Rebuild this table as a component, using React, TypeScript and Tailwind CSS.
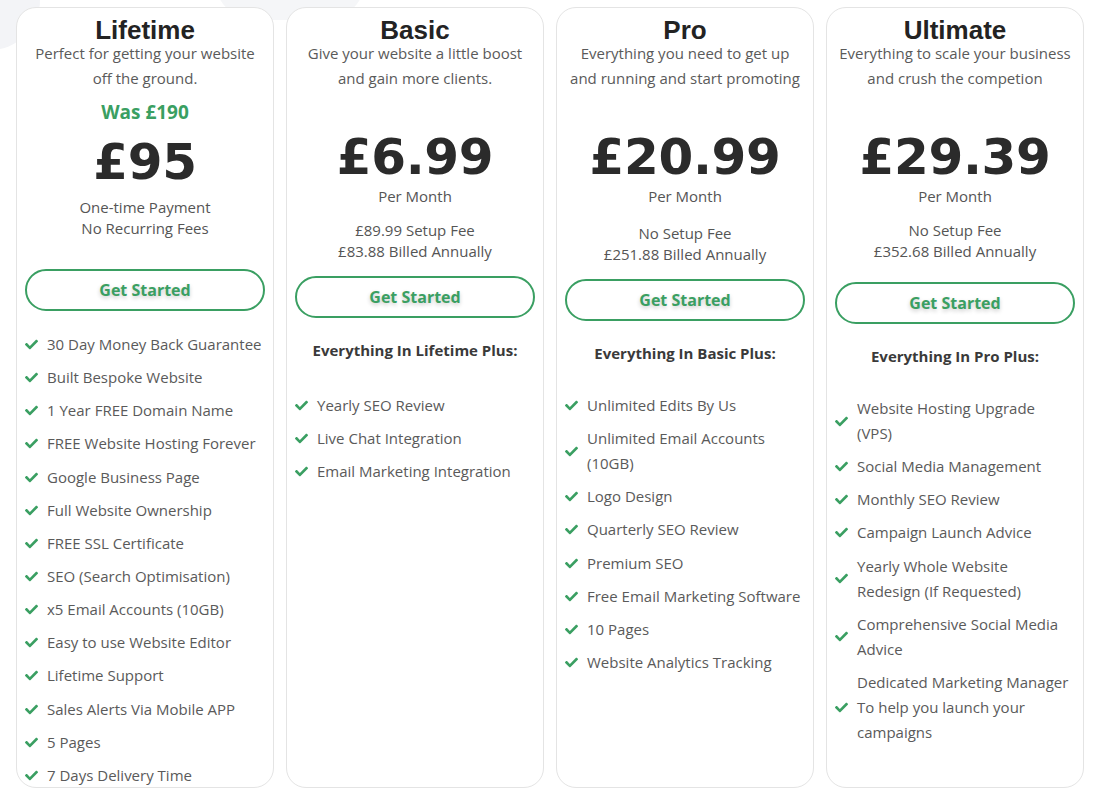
import React from 'react';
import { FaCheck } from 'react-icons/fa';

type Plan = {
  name: string;
  desc: string[];
  was?: string;
  price: string;
  perMonth?: boolean;
  fees: string[];
  heading?: string;
  features: string[][];
  feesMt: string;
  buttonMt: string;
  headingMt: string;
  featuresMt: string;
};

const plans: Plan[] = [
  {
    name: 'Lifetime',
    desc: ['Perfect for getting your website', 'off the ground.'],
    was: 'Was £190',
    price: '£95',
    fees: ['One-time Payment', 'No Recurring Fees'],
    features: [
      ['30 Day Money Back Guarantee'],
      ['Built Bespoke Website'],
      ['1 Year FREE Domain Name'],
      ['FREE Website Hosting Forever'],
      ['Google Business Page'],
      ['Full Website Ownership'],
      ['FREE SSL Certificate'],
      ['SEO (Search Optimisation)'],
      ['x5 Email Accounts (10GB)'],
      ['Easy to use Website Editor'],
      ['Lifetime Support'],
      ['Sales Alerts Via Mobile APP'],
      ['5 Pages'],
      ['7 Days Delivery Time'],
    ],
    feesMt: 'mt-[6px]',
    buttonMt: 'mt-[30px]',
    headingMt: 'mt-0',
    featuresMt: 'mt-[21px]',
  },
  {
    name: 'Basic',
    desc: ['Give your website a little boost', 'and gain more clients.'],
    price: '£6.99',
    perMonth: true,
    fees: ['£89.99 Setup Fee', '£83.88 Billed Annually'],
    heading: 'Everything In Lifetime Plus:',
    features: [['Yearly SEO Review'], ['Live Chat Integration'], ['Email Marketing Integration']],
    feesMt: 'mt-[13px]',
    buttonMt: 'mt-[14px]',
    headingMt: 'mt-[22px]',
    featuresMt: 'mt-[32px]',
  },
  {
    name: 'Pro',
    desc: ['Everything you need to get up', 'and running and start promoting'],
    price: '£20.99',
    perMonth: true,
    fees: ['No Setup Fee', '£251.88 Billed Annually'],
    heading: 'Everything In Basic Plus:',
    features: [
      ['Unlimited Edits By Us'],
      ['Unlimited Email Accounts', '(10GB)'],
      ['Logo Design'],
      ['Quarterly SEO Review'],
      ['Premium SEO'],
      ['Free Email Marketing Software'],
      ['10 Pages'],
      ['Website Analytics Tracking'],
    ],
    feesMt: 'mt-[16px]',
    buttonMt: 'mt-[14px]',
    headingMt: 'mt-[22px]',
    featuresMt: 'mt-[29px]',
  },
  {
    name: 'Ultimate',
    desc: ['Everything to scale your business', 'and crush the competion'],
    price: '£29.39',
    perMonth: true,
    fees: ['No Setup Fee', '£352.68 Billed Annually'],
    heading: 'Everything In Pro Plus:',
    features: [
      ['Website Hosting Upgrade', '(VPS)'],
      ['Social Media Management'],
      ['Monthly SEO Review'],
      ['Campaign Launch Advice'],
      ['Yearly Whole Website', 'Redesign (If Requested)'],
      ['Comprehensive Social Media', 'Advice'],
      ['Dedicated Marketing Manager', 'To help you launch your', 'campaigns'],
    ],
    feesMt: 'mt-[13px]',
    buttonMt: 'mt-[20px]',
    headingMt: 'mt-[22px]',
    featuresMt: 'mt-[29px]',
  },
];

function PlanCard({ plan }: { plan: Plan }) {
  return (
    <div className="relative h-[781px] overflow-hidden rounded-[20px] border border-[#e4e4e4] bg-white px-[8px] pt-[11px]">
      {/* Header */}
      <h2 className="text-center font-['Liberation_Sans',Arial,sans-serif] text-[26px] font-bold leading-[22px] text-[#232323]">
        {plan.name}
      </h2>
      <div className="text-center text-[15px] leading-[25px] text-[#5a5a5a]">
        {plan.desc.map((line) => (
          <div key={line} className="whitespace-nowrap">
            {line}
          </div>
        ))}
      </div>

      {plan.was ? (
        <div className="mt-[9px] text-center text-[19px] font-bold leading-[24px] text-[#3a9f62]">{plan.was}</div>
      ) : null}

      {/* Price */}
      <div
        className={`text-center font-['DejaVu_Sans',sans-serif] text-[50px] font-bold leading-[58px] tracking-[-0.3px] text-[#2b2b2b] ${
          plan.was ? 'mt-[9px]' : 'mt-[37px]'
        }`}
      >
        {plan.price}
      </div>
      {plan.perMonth ? (
        <div className="text-center text-[15px] leading-[21px] text-[#555]">Per Month</div>
      ) : null}

      <div className={`text-center text-[15px] leading-[21px] text-[#555] ${plan.feesMt}`}>
        {plan.fees.map((line) => (
          <div key={line}>{line}</div>
        ))}
      </div>

      <button
        className={`flex h-[42px] w-full items-center justify-center rounded-full border-2 border-[#3a9f62] bg-white text-[16px] font-bold text-[#3a9f62] [text-shadow:0_2px_4px_rgba(0,0,0,0.22)] ${plan.buttonMt}`}
      >
        Get Started
      </button>

      {plan.heading ? (
        <div className={`text-center text-[15px] font-bold leading-[21px] text-[#3a3a3a] ${plan.headingMt}`}>
          {plan.heading}
        </div>
      ) : null}

      {/* Features */}
      <ul className={plan.featuresMt}>
        {plan.features.map((lines) => (
          <li key={lines[0]} className="mb-[8.15px] flex items-center gap-[9px]">
            <FaCheck className="h-[13px] w-[13px] shrink-0 text-[#3a9f62]" />
            <span className="text-[15px] leading-[25px] text-[#5a5a5a]">
              {lines.map((l) => (
                <span key={l} className="block whitespace-nowrap">
                  {l}
                </span>
              ))}
            </span>
          </li>
        ))}
      </ul>
    </div>
  );
}

export default function App() {
  return (
    <div className="relative min-h-[800px] w-[1098px] overflow-hidden bg-white font-['Open_Sans',Inter,sans-serif]">
      {/* faint background shapes */}
      <div className="absolute -left-[60px] -top-[50px] h-[100px] w-[100px] rounded-full bg-[#f3f4f7]" />
      <div className="absolute left-[215px] -top-[60px] h-[80px] w-[150px] rounded-full bg-[#f5f6f8]" />

      <div className="relative grid grid-cols-[repeat(4,258px)] gap-[12px] px-[16px] pt-[7px]">
        {plans.map((p) => (
          <PlanCard key={p.name} plan={p} />
        ))}
      </div>
    </div>
  );
}
